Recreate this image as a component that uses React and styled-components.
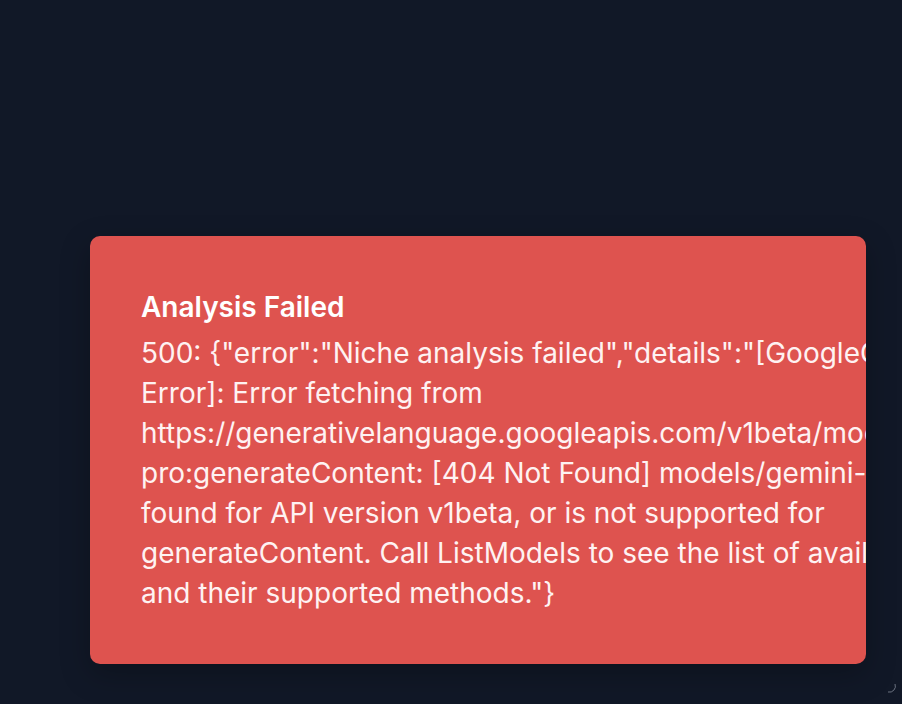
import styled, { createGlobalStyle } from "styled-components";

const Global = createGlobalStyle`
  html, body {
    margin: 0;
    padding: 0;
    background: #111827;
  }
  body {
    font-family: Inter, "Noto Sans", sans-serif;
    -webkit-font-smoothing: antialiased;
  }
`;

const Page = styled.main`
  position: relative;
  width: 902px;
  height: 704px;
  overflow: hidden;
  background: #111827;
  box-sizing: border-box;
  padding: 236px 0 0 90px;
`;

const ErrorCard = styled.section`
  width: 776px;
  height: 428px;
  box-sizing: border-box;
  padding: 53px 0 0 51px;
  background: #de534f;
  border-radius: 10px;
  overflow: hidden;
  box-shadow: 0 10px 30px rgba(0, 0, 0, 0.25);
`;

const Title = styled.h2`
  margin: 0 0 8px;
  font-size: 28px;
  line-height: 36px;
  font-weight: 600;
  color: #ffffff;
`;

const Message = styled.p`
  margin: 0;
  width: 896px;
  font-size: 28px;
  line-height: 40px;
  font-weight: 400;
  color: #fef2f2;
`;

const Spinner = styled.svg`
  position: absolute;
  right: 4px;
  bottom: 9px;
  width: 14px;
  height: 14px;
`;

const message =
  '500: {"error":"Niche analysis failed","details":"[GoogleGenerativeAI Error]: Error fetching from https://generativelanguage.googleapis.com/v1beta/models/gemini-pro:generateContent: [404 Not Found] models/gemini-pro is not found for API version v1beta, or is not supported for generateContent. Call ListModels to see the list of available models and their supported methods."}';

export default function App() {
  return (
    <Page>
      <Global />
      <ErrorCard>
        <Title>Analysis Failed</Title>
        <Message>{message}</Message>
      </ErrorCard>
      <Spinner viewBox="0 0 14 14">
        <path d="M11 3 A6 6 0 0 1 4 11" fill="none" stroke="#6b7280" strokeWidth="1" />
      </Spinner>
    </Page>
  );
}
